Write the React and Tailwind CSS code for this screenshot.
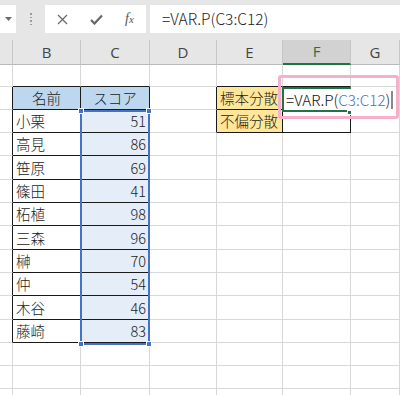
import React from 'react';

const names = ['小栗', '高見', '笹原', '篠田', '柘植', '三森', '榊', '仲', '木谷', '藤崎'];
const scores = [51, 86, 69, 41, 98, 96, 70, 54, 46, 83];
const letters = ['', 'B', 'C', 'D', 'E', 'F', 'G'];
const ROW_COUNT = 15;

// which cells belong to the two bordered tables
const inTable = (r, c) => (r >= 1 && r <= 11 && (c === 1 || c === 2)) || (r >= 1 && r <= 2 && (c === 4 || c === 5));

function cellContent(r, c) {
  if (r === 1 && c === 1) return { text: '名前', align: 'center', fill: 'head' };
  if (r === 1 && c === 2) return { text: 'スコア', align: 'center', fill: 'head' };
  if (r >= 2 && r <= 11 && c === 1) return { text: names[r - 2], align: 'left' };
  if (r >= 2 && r <= 11 && c === 2) return { text: String(scores[r - 2]), align: 'right', fill: 'range' };
  if (r === 1 && c === 4) return { text: '標本分散', align: 'left', fill: 'label' };
  if (r === 2 && c === 4) return { text: '不偏分散', align: 'left', fill: 'label' };
  return { text: '', align: 'left' };
}

function Cell({ r, c }) {
  const { text, align, fill } = cellContent(r, c);
  const blackRight = inTable(r, c) || inTable(r, c + 1);
  const blackBottom = inTable(r, c) || inTable(r + 1, c);
  const rightCls = blackRight ? 'border-r-[#1a1a1a]' : 'border-r-[#d8d8d8]';
  const bottomCls = blackBottom ? 'border-b-[#1a1a1a]' : 'border-b-[#d8d8d8]';
  const fillCls = fill === 'head' ? 'bg-[#bdd7ee]' : fill === 'range' ? 'bg-[#e5edf8]' : fill === 'label' ? 'bg-[#ffe699]' : 'bg-white';
  const alignCls = align === 'center' ? 'justify-center' : align === 'right' ? 'justify-end pr-[3px]' : 'justify-start pl-[3px]';
  return (
    <div className={`flex items-center overflow-hidden whitespace-nowrap border-r border-b ${rightCls} ${bottomCls} ${fillCls} ${alignCls} pt-[1px] text-[14.5px] font-light leading-none text-[#222]`}>
      {text}
    </div>
  );
}

function FormulaBar() {
  return (
    <div className="flex h-[40px] bg-[#e6e6e6] pt-[5px]">
      <div className="flex h-[28px] w-[16px] items-center justify-center bg-white">
        <svg width="7" height="4" viewBox="0 0 7 4"><path d="M0 0h7L3.5 4z" fill="#6b6b6b" /></svg>
      </div>
      <div className="ml-[14px] flex h-[28px] w-[2px] flex-col items-center justify-center gap-[2px]">
        <span className="h-[1.5px] w-[1.5px] bg-[#9a9a9a]" />
        <span className="h-[1.5px] w-[1.5px] bg-[#9a9a9a]" />
        <span className="h-[1.5px] w-[1.5px] bg-[#9a9a9a]" />
        <span className="h-[1.5px] w-[1.5px] bg-[#9a9a9a]" />
      </div>
      <div className="ml-[13px] flex h-[28px] w-[101px] items-center bg-white">
        <svg className="ml-[12px]" width="11" height="11" viewBox="0 0 11 11">
          <path d="M1 1l9 9M10 1l-9 9" stroke="#6a6a6a" strokeWidth="1.3" />
        </svg>
        <svg className="ml-[22px]" width="13" height="11" viewBox="0 0 13 11">
          <path d="M1 6l3.5 3.5L12 1.5" stroke="#666" strokeWidth="2.2" fill="none" />
        </svg>
        <span className="ml-[22px] text-[14px] italic leading-none text-[#555]" style={{ fontFamily: '"Liberation Serif", serif' }}>
          f<span className="text-[11px]">x</span>
        </span>
      </div>
      <div className="ml-[4px] flex h-[28px] flex-1 items-center bg-white pl-[12px] text-[15.5px] font-light text-[#222]">
        =VAR.P(C3:C12)
      </div>
    </div>
  );
}

function ColumnHeaders() {
  return (
    <div className="grid h-[25px] grid-cols-[13px_68px_69px_67px_66px_68px_49px] bg-[#e6e6e6]">
      {letters.map((l, i) =>
        i === 5 ? (
          <div key={i} className="flex items-center justify-center border-r border-r-[#c6c6c6] border-b-2 border-b-[#217346] bg-[#d2d2d2] text-[15px] text-[#217346]" style={{ fontFamily: '"Open Sans", sans-serif' }}>
            {l}
          </div>
        ) : (
          <div key={i} className="flex items-center justify-center border-r border-r-[#c6c6c6] border-b border-b-[#b9b9b9] text-[15px] text-[#444]" style={{ fontFamily: '"Open Sans", sans-serif' }}>
            {l}
          </div>
        )
      )}
    </div>
  );
}

export default function App() {
  const cells = [];
  for (let r = 0; r < ROW_COUNT; r++) {
    for (let c = 0; c < 7; c++) cells.push(<Cell key={`${r}-${c}`} r={r} c={c} />);
  }
  return (
    <div className="h-[395px] w-[400px] overflow-hidden bg-white" style={{ fontFamily: '"Noto Sans CJK JP", "Noto Sans", sans-serif' }}>
      <FormulaBar />
      <ColumnHeaders />
      <div className="relative grid grid-cols-[13px_68px_69px_67px_66px_68px_49px] grid-rows-[22px_23px_23px_23px_24px_23px_23px_24px_23px_23px_24px_23px_23px_23px_23px]">
        {cells}

        {/* referenced range C3:C12 */}
        <div className="pointer-events-none absolute left-[80px] top-[45px] h-[235px] w-[70px] border-2 border-[#4472c4]" />
        <div className="absolute left-[78px] top-[43px] h-[6px] w-[6px] border border-white bg-[#4472c4]" />
        <div className="absolute left-[146px] top-[43px] h-[6px] w-[6px] border border-white bg-[#4472c4]" />
        <div className="absolute left-[78px] top-[276px] h-[6px] w-[6px] border border-white bg-[#4472c4]" />
        <div className="absolute left-[146px] top-[276px] h-[6px] w-[6px] border border-white bg-[#4472c4]" />

        {/* in-cell edit of F2 */}
        <div className="absolute left-[284px] top-[24px] flex h-[22px] w-[112px] items-center whitespace-nowrap bg-white pl-[2px] text-[15.2px] font-light leading-none text-[#111]">
          <span>=VAR.P(</span>
          <span className="text-[#4472c4]">C3:C12</span>
          <span>)</span>
          <span className="ml-[1px] h-[18px] w-[1.5px] shrink-0 bg-[#8a8a8a]" />
        </div>
        <div className="pointer-events-none absolute left-[282px] top-[22px] h-[25px] w-[69px] border-l-2 border-t-2 border-b-2 border-[#217346]" />
        <div className="absolute left-[347px] top-[45px] h-[5px] w-[5px] border border-white bg-[#217346]" />

        {/* annotation frame */}
        <div className="pointer-events-none absolute left-[278px] top-[10px] h-[44px] w-[121px] rounded-[3px] border-[3px] border-[#f5b0cb]" />
      </div>
    </div>
  );
}
